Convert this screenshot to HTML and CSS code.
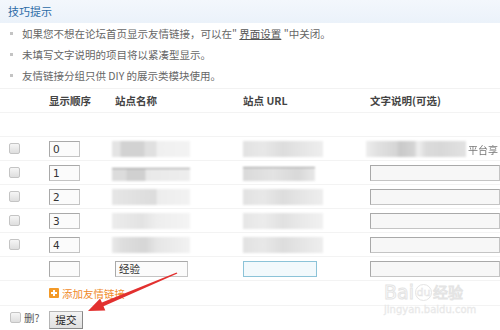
FILE: index.html
```html
<!DOCTYPE html>
<html lang="zh">
<head>
<meta charset="utf-8">
<title>友情链接</title>
<link rel="stylesheet" href="styles.css">
</head>
<body>
<div class="page">
  <div class="tipbar">技巧提示</div>
  <ul class="tips">
    <li>如果您不想在论坛首页显示友情链接，可以在" <a class="lnk">界面设置</a> "中关闭。</li>
    <li>未填写文字说明的项目将以紧凑型显示。</li>
    <li>友情链接分组只供 DIY 的展示类模块使用。</li>
  </ul>
  <div class="table">
    <div class="row head">
      <div></div><div>显示顺序</div><div>站点名称</div><div>站点 URL</div><div>文字说明(可选)</div>
    </div>
    <div class="row empty"></div>
    <div class="row">
      <div class="c1"><input type="checkbox" class="cb"></div>
      <div><span class="ord">0</span></div>
      <div><div class="blur n0"></div></div>
      <div><div class="blur u0"></div></div>
      <div class="desc"><div class="blur d0"></div><span class="leak">平台享</span></div>
    </div>
    <div class="row">
      <div class="c1"><input type="checkbox" class="cb"></div>
      <div><span class="ord">1</span></div>
      <div><div class="blur n1"></div></div>
      <div><div class="blur u1"></div></div>
      <div class="desc"><span class="txt"></span></div>
    </div>
    <div class="row">
      <div class="c1"><input type="checkbox" class="cb"></div>
      <div><span class="ord">2</span></div>
      <div><div class="blur n2"></div></div>
      <div><div class="blur u2"></div></div>
      <div class="desc"><span class="txt"></span></div>
    </div>
    <div class="row">
      <div class="c1"><input type="checkbox" class="cb"></div>
      <div><span class="ord">3</span></div>
      <div><div class="blur n3"></div></div>
      <div><div class="blur u3"></div></div>
      <div class="desc"><span class="txt"></span></div>
    </div>
    <div class="row">
      <div class="c1"><input type="checkbox" class="cb"></div>
      <div><span class="ord">4</span></div>
      <div><div class="blur n4"></div></div>
      <div><div class="blur u4"></div></div>
      <div class="desc"><span class="txt"></span></div>
    </div>
    <div class="row">
      <div class="c1"></div>
      <div><span class="ord"></span></div>
      <div><span class="name">经验</span></div>
      <div><span class="url"></span></div>
      <div class="desc"><span class="txt"></span></div>
    </div>
    <div class="row add">
      <div></div>
      <div class="addcell"><span class="plus"></span><span class="addtxt">添加友情链接</span></div>
    </div>
    <div class="row submit">
      <div class="c1 del"><input type="checkbox" class="cb"><span>删?</span></div>
      <div><span class="btn">提交</span></div>
    </div>
  </div>

  <div class="wm">
    <div class="wm-main"><span>Bai</span><span class="wm-du">du</span><span class="wm-cn">经验</span></div>
    <div class="wm-url">jingyan.baidu.com</div>
  </div>

  <svg class="arrow" width="500" height="330" viewBox="0 0 500 330">
    <polygon points="177.4,273.6 176.6,272.4 101.9,302.6 100.1,298.6 88,311 105.3,310.6 103.5,306.3" fill="#e2302f"/>
  </svg>
</div>
</body>
</html>
```

FILE: styles.css
```css
html, body {
  margin: 0;
  padding: 0;
  background: #fff;
}
body {
  font-family: "Noto Sans CJK SC", "DejaVu Sans", sans-serif;
  font-size: 11px;
  color: #555;
}
.page {
  position: relative;
  width: 500px;
  height: 330px;
  overflow: hidden;
}
.tipbar {
  height: 23px;
  line-height: 22px;
  padding-left: 8px;
  background: linear-gradient(#f3f7fc, #ebf2fa);
  color: #2b6aa6;
  font-size: 11px;
}
.tips {
  list-style: none;
  margin: 0;
  padding: 0 0 2px 0;
}
.tips li {
  height: 21px;
  line-height: 21px;
  padding-left: 22px;
  position: relative;
  color: #666;
  font-size: 10.5px;
}
.tips li::before {
  content: "";
  position: absolute;
  left: 10px;
  top: 9px;
  width: 3px;
  height: 3px;
  background: #c4c4c4;
}
.lnk {
  color: #555;
  text-decoration: underline;
}
.table {
  border-top: 1px solid #f2f2f2;
}
.row {
  display: grid;
  grid-template-columns: 49px 66px 128px 127px 1fr;
  height: 24px;
  align-items: center;
  border-bottom: 1px solid #f3f3f3;
  box-sizing: border-box;
}
.row > div {
  display: flex;
  align-items: center;
  height: 100%;
  min-width: 0;
}
.head {
  height: 24px;
  font-weight: bold;
  color: #444;
  font-size: 10.5px;
}
.empty {
  height: 24px;
}
.c1 {
  padding-left: 9px;
}
.cb {
  appearance: none;
  -webkit-appearance: none;
  margin: 0;
  width: 11px;
  height: 11px;
  border: 1px solid #c4c4c4;
  border-radius: 2px;
  background: linear-gradient(#f6f6f6, #dedede);
  box-sizing: border-box;
}
.ord, .name, .url, .txt {
  display: block;
  height: 16px;
  box-sizing: border-box;
  border: 1px solid #c4c4c4;
  border-top-color: #a9a9a9;
  border-left-color: #a9a9a9;
  background: #fbfbfb;
  line-height: 14px;
  padding-left: 3px;
  color: #333;
  font-family: "DejaVu Sans", "Noto Sans CJK SC", sans-serif;
  font-size: 10.5px;
}
.ord {
  width: 31px;
}
.name {
  width: 73px;
  font-family: "Noto Sans CJK SC", sans-serif;
}
.url {
  width: 74px;
  border: 1px solid #8cc3d8;
  background: #f2f9fc;
}
.txt {
  width: 140px;
  background: #f7f7f7;
}
.desc {
  position: relative;
}
.blur {
  height: 16px;
  filter: blur(1.2px);
}
.n0 {
  width: 78px;
  margin-left: -3px;
  background: linear-gradient(90deg, #e4e4e4 0, #e4e4e4 8px, #d2d2d2 9px, #d2d2d2 32px, #e0e0e0 33px, #e0e0e0 44px, #f0f0f0 45px, #f3f3f3 78px);
}
.n1 {
  width: 78px;
  margin-left: -3px;
  background: linear-gradient(#fff 0, #fff 3px, #999 3px, #999 4px, transparent 4px),
              linear-gradient(90deg, #dcdcdc 0, #dcdcdc 14px, #d0d0d0 15px, #d0d0d0 33px, #e9e9e9 34px, #eeeeee 78px);
}
.n2 {
  width: 78px;
  margin-left: -3px;
  background: linear-gradient(90deg, #e6e6e6 0, #dcdcdc 44px, #ededed 45px, #f2f2f2 78px);
}
.n3 {
  width: 78px;
  margin-left: -3px;
  background: linear-gradient(90deg, #ececec 0, #e3e3e3 30px, #eeeeee 45px, #f4f4f4 78px);
}
.n4 {
  width: 78px;
  margin-left: -3px;
  background: linear-gradient(90deg, #e9e9e9 0, #dedede 10px, #d6d6d6 33px, #e6e6e6 45px, #f2f2f2 78px);
}
.u0, .u2, .u3, .u4 {
  width: 80px;
  background: linear-gradient(90deg, #e2e2e2 0, #e8e8e8 20px, #dddddd 40px, #e6e6e6 60px, #eeeeee 80px);
}
.u1 {
  width: 72px;
  background: linear-gradient(#fff 0, #fff 2px, #999 2px, #999 3px, transparent 3px),
              linear-gradient(90deg, #dadada 0, #e3e3e3 30px, #d8d8d8 55px, #e8e8e8 72px);
}
.u3 {
  background: linear-gradient(90deg, #e6e6e6 0, #ececec 20px, #e1e1e1 40px, #eaeaea 60px, #f1f1f1 80px);
}
.d0 {
  width: 100px;
  margin-left: -4px;
  background: linear-gradient(90deg, #eeeeee 0, #e2e2e2 10px, #d6d6d6 30px, #c9c9c9 34px, #d4d4d4 48px, #f0f0f0 52px, #dbdbdb 60px, #d8d8d8 75px, #e2e2e2 100px);
}
.leak {
  position: absolute;
  left: 98px;
  top: 5px;
  font-size: 10px;
  color: #777;
  filter: blur(0.4px);
}
.add {
  height: 25px;
}
.addcell {
  gap: 3px;
}
.plus {
  position: relative;
  width: 10px;
  height: 10px;
  background: #f39a28;
  border-radius: 1px;
  flex: none;
}
.plus::before, .plus::after {
  content: "";
  position: absolute;
  background: #fff;
}
.plus::before {
  left: 2px;
  top: 4px;
  width: 6px;
  height: 2px;
}
.plus::after {
  left: 4px;
  top: 2px;
  width: 2px;
  height: 6px;
}
.addtxt {
  color: #f08a2a;
  font-size: 10.5px;
  white-space: nowrap;
}
.submit {
  border-bottom: none;
  height: 23px;
}
.del {
  gap: 3px;
  padding-left: 10px;
  color: #555;
  font-size: 10.5px;
}
.btn {
  display: block;
  width: 34px;
  height: 18px;
  box-sizing: border-box;
  border: 1px solid #b5b5b5;
  border-right-color: #888;
  border-bottom-color: #888;
  background: linear-gradient(#f4f4f4, #e0e0e0);
  text-align: center;
  line-height: 16px;
  color: #222;
  font-size: 10.5px;
  margin-top: 4px;
}
.wm {
  position: absolute;
  left: 384px;
  top: 281px;
  color: #fff;
  pointer-events: none;
}
.wm-main {
  font-family: "DejaVu Sans", sans-serif;
  font-size: 19px;
  line-height: 22px;
  -webkit-text-stroke: 1px #e4e4e4;
  display: flex;
  align-items: center;
}
.wm-du {
  font-size: 11px;
  border: 1.5px solid #e4e4e4;
  border-radius: 50%;
  width: 15px;
  height: 15px;
  line-height: 15px;
  text-align: center;
  -webkit-text-stroke: 0.6px #e4e4e4;
  margin: 0 1px;
}
.wm-cn {
  font-family: "Noto Sans CJK SC", sans-serif;
  font-size: 15px;
}
.wm-url {
  font-family: "DejaVu Sans", sans-serif;
  font-size: 10px;
  color: #ececec;
  -webkit-text-stroke: 0.3px #e6e6e6;
  margin-top: 1px;
}
.arrow {
  position: absolute;
  left: 0;
  top: 0;
  pointer-events: none;
}
```
